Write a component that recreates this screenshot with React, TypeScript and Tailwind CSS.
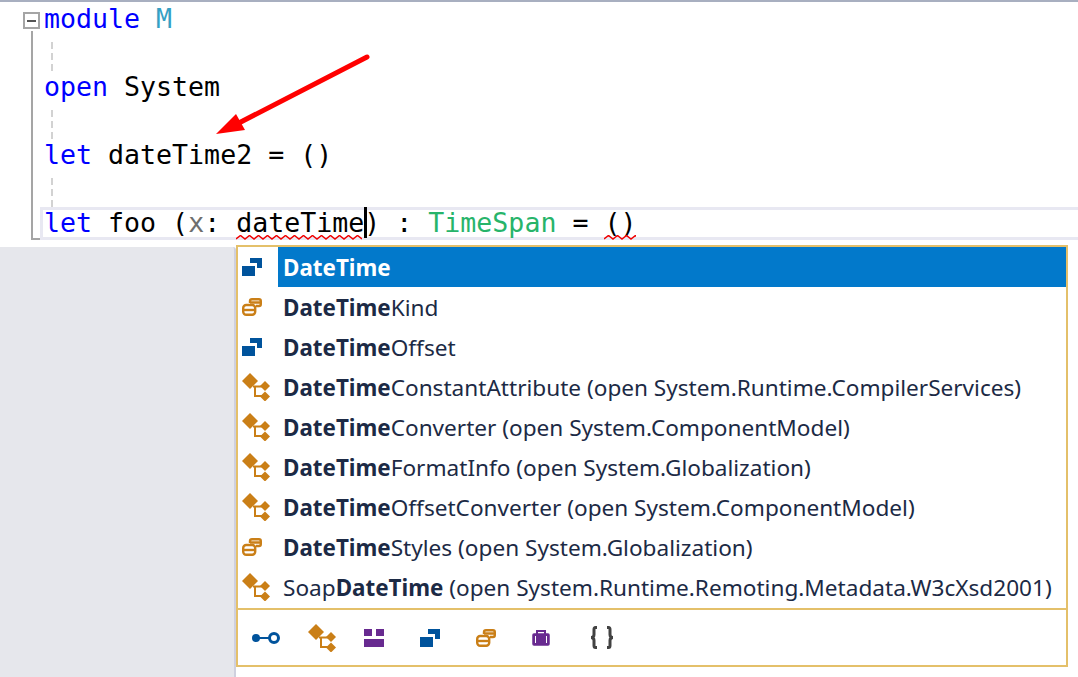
import React from 'react';

const kw = 'text-[#0000ff]';

function ClassIcon({ className = '' }: { className?: string }) {
  return (
    <svg width="28" height="28" viewBox="0 0 28 28" className={className}>
      <path d="M8 0 L16 8 L8 16 L0 8 Z" fill="#ca7f17" />
      <path d="M23 8 L28 13 L23 18 L18 13 Z" fill="#ca7f17" />
      <path d="M23 18.5 L28 23.5 L23 28.5 L18 23.5 Z" fill="#ca7f17" />
      <path d="M11 13.5 H20 M13 13.5 V23 H20" fill="none" stroke="#ca7f17" strokeWidth="2" />
    </svg>
  );
}

function StructIcon() {
  return (
    <svg width="20" height="18" viewBox="0 0 20 18">
      <path d="M8 0 H20 V10 H15 V5 H8 Z" fill="#00539c" />
      <rect x="0" y="8" width="13" height="10" fill="#00539c" />
    </svg>
  );
}

function EnumIcon() {
  return (
    <svg width="20" height="18" viewBox="0 0 20 18" fill="none" stroke="#ca7f17" strokeWidth="2.4">
      <path d="M8 5 V3 Q8 1.2 10 1.2 H17 Q18.8 1.2 18.8 3 V6 Q18.8 8 17 8 H14 M8 4.5 H19" />
      <rect x="1.2" y="7" width="12" height="9.8" rx="3" />
      <path d="M1 12 H13" />
    </svg>
  );
}

function Squiggle({ width }: { width: number }) {
  const segments = Math.ceil(width / 4.5);
  let d = 'M0 4';
  for (let i = 0; i < segments; i++) d += ` L${(i + 1) * 4.5} ${i % 2 === 0 ? 0.5 : 4}`;
  return (
    <svg width={width} height="5" viewBox={`0 0 ${width} 5`} className="absolute left-0 top-[29px]">
      <path d={d} fill="none" stroke="#f00000" strokeWidth="1.5" />
    </svg>
  );
}

const items: { icon: 'struct' | 'enum' | 'class'; pre?: string; bold: string; rest?: string }[] = [
  { icon: 'struct', bold: 'DateTime' },
  { icon: 'enum', bold: 'DateTime', rest: 'Kind' },
  { icon: 'struct', bold: 'DateTime', rest: 'Offset' },
  { icon: 'class', bold: 'DateTime', rest: 'ConstantAttribute (open System.Runtime.CompilerServices)' },
  { icon: 'class', bold: 'DateTime', rest: 'Converter (open System.ComponentModel)' },
  { icon: 'class', bold: 'DateTime', rest: 'FormatInfo (open System.Globalization)' },
  { icon: 'class', bold: 'DateTime', rest: 'OffsetConverter (open System.ComponentModel)' },
  { icon: 'enum', bold: 'DateTime', rest: 'Styles (open System.Globalization)' },
  { icon: 'class', pre: 'Soap', bold: 'DateTime', rest: ' (open System.Runtime.Remoting.Metadata.W3cXsd2001)' },
];

export default function App() {
  return (
    <div className="w-[1078px] h-[677px] bg-white overflow-hidden font-['Noto_Sans',sans-serif]">
      {/* Editor */}
      <div className="relative h-[245px] border-t-2 border-[#a8afc0] font-['DejaVu_Sans_Mono',monospace] text-[26.6px] leading-[34px] text-black whitespace-pre">
        {/* Fold margin */}
        <div className="absolute left-[23px] top-[10px] w-[17px] h-[17px] border-2 border-[#a5a5a5] flex items-center justify-center">
          <div className="w-[9px] h-[2px] bg-[#555555]" />
        </div>
        <div className="absolute left-[31px] top-[29px] w-[10px] h-[209px] border-l-2 border-b-2 border-[#a5a5a5]" />

        {/* Arrow */}
        <svg className="absolute left-[200px] top-[40px]" width="180" height="100" viewBox="0 0 180 100">
          <path d="M167 15 L35 83" stroke="#ff0000" strokeWidth="5" strokeLinecap="round" fill="none" />
          <path d="M16 92 L36 72 L45 88 Z" fill="#ff0000" />
        </svg>

        <div className="pl-[44px]">
          <div className="h-[34px]">
            <span className={kw}>module</span> <span className="text-[#36a0c4]">M</span>
          </div>
          <Guide />
          <div className="h-[34px]">
            <span className={kw}>open</span> System
          </div>
          <Guide />
          <div className="h-[34px]">
            <span className={kw}>let</span> dateTime2 = ()
          </div>
          <Guide />
          <div className="relative h-[34px]">
            <div className="absolute -left-[4px] right-0 top-[1px] h-[33px] border-y-[3px] border-l-[3px] border-[#e8e8f2]" />
            <div className="relative">
              <span className={kw}>let</span> foo (<span className="text-[#6e6e6e]">x</span>:{' '}
              <span className="relative inline-block">
                dateTime
                <Squiggle width={126} />
                <span className="absolute right-[-3px] top-[1px] w-[3px] h-[31px] bg-black" />
              </span>
              ) : <span className="text-[#27b46a]">TimeSpan</span> ={' '}
              <span className="relative inline-block">
                ()
                <Squiggle width={32} />
              </span>
            </div>
          </div>
        </div>
      </div>

      <div className="flex h-[432px]">
        {/* Empty tool area */}
        <div className="w-[236px] mt-[2px] bg-[#e6e7ec] border-r-2 border-[#cfd0de] rounded-tr-[3px]" />

        {/* Completion list */}
        <div className="w-[832px] h-[422px] border-2 border-[#e4c06a] flex flex-col text-[22.6px] text-[#1c2a45]">
          <div className="flex flex-col">
            {items.map((item, i) => (
              <div key={i} className="flex h-[40px] items-center">
                <div className="w-[40px] h-full flex items-center pl-[4px]">
                  {item.icon === 'struct' && <StructIcon />}
                  {item.icon === 'enum' && <EnumIcon />}
                  {item.icon === 'class' && <ClassIcon />}
                </div>
                <div className={`flex-1 h-full flex items-center pl-[5px] pt-[1px] whitespace-pre ${i === 0 ? 'bg-[#0279cb] text-white' : ''}`}>
                  {item.pre}
                  <span className="font-bold text-[22.4px]">{item.bold}</span>
                  {item.rest}
                </div>
              </div>
            ))}
          </div>

          {/* Filter icons */}
          <div className="flex-1 mt-[1px] border-t-2 border-[#e4c06a] flex items-center pl-[14px]">
            <svg width="28" height="12" viewBox="0 0 28 12" className="mr-[28px]">
              <circle cx="4" cy="6" r="4" fill="#00539c" />
              <path d="M4 6 H18" stroke="#00539c" strokeWidth="2" />
              <circle cx="22" cy="6" r="4.5" fill="none" stroke="#00539c" strokeWidth="3" />
            </svg>
            <ClassIcon className="mr-[28px]" />
            <svg width="20" height="18" viewBox="0 0 20 18" className="mr-[36px]">
              <path d="M0 0 H8 V7 H0 Z M12 0 H20 V7 H12 Z M0 10 H20 V18 H0 Z" fill="#682a90" />
            </svg>
            <div className="mr-[36px] flex">
              <StructIcon />
            </div>
            <div className="mr-[36px] flex">
              <EnumIcon />
            </div>
            <svg width="18" height="16" viewBox="0 0 18 16" className="mr-[40px]">
              <path d="M5 4 V1 H13 V4" fill="none" stroke="#682a90" strokeWidth="2" />
              <rect x="1" y="4" width="16" height="11" rx="1" fill="#682a90" stroke="#682a90" strokeWidth="1.5" />
              <path d="M3.5 6 V13 M14.5 6 V13" stroke="#ffffff" strokeWidth="1" />
            </svg>
            <svg width="24" height="23" viewBox="0 0 24 23" fill="none" stroke="#424242" strokeWidth="3">
              <path d="M7 1.5 H5.5 Q4 1.5 4 3.5 V8.5 Q4 11.5 1 11.5 Q4 11.5 4 14.5 V19.5 Q4 21.5 5.5 21.5 H7" />
              <path d="M17 1.5 H18.5 Q20 1.5 20 3.5 V8.5 Q20 11.5 23 11.5 Q20 11.5 20 14.5 V19.5 Q20 21.5 18.5 21.5 H17" />
            </svg>
          </div>
        </div>
      </div>
    </div>
  );
}

function Guide() {
  return (
    <div className="h-[34px] pl-[7px] pt-[6px]">
      <div className="w-[2px] h-[30px] bg-[repeating-linear-gradient(to_bottom,#d2d2d2_0,#d2d2d2_7px,transparent_7px,transparent_11px)]" />
    </div>
  );
}
